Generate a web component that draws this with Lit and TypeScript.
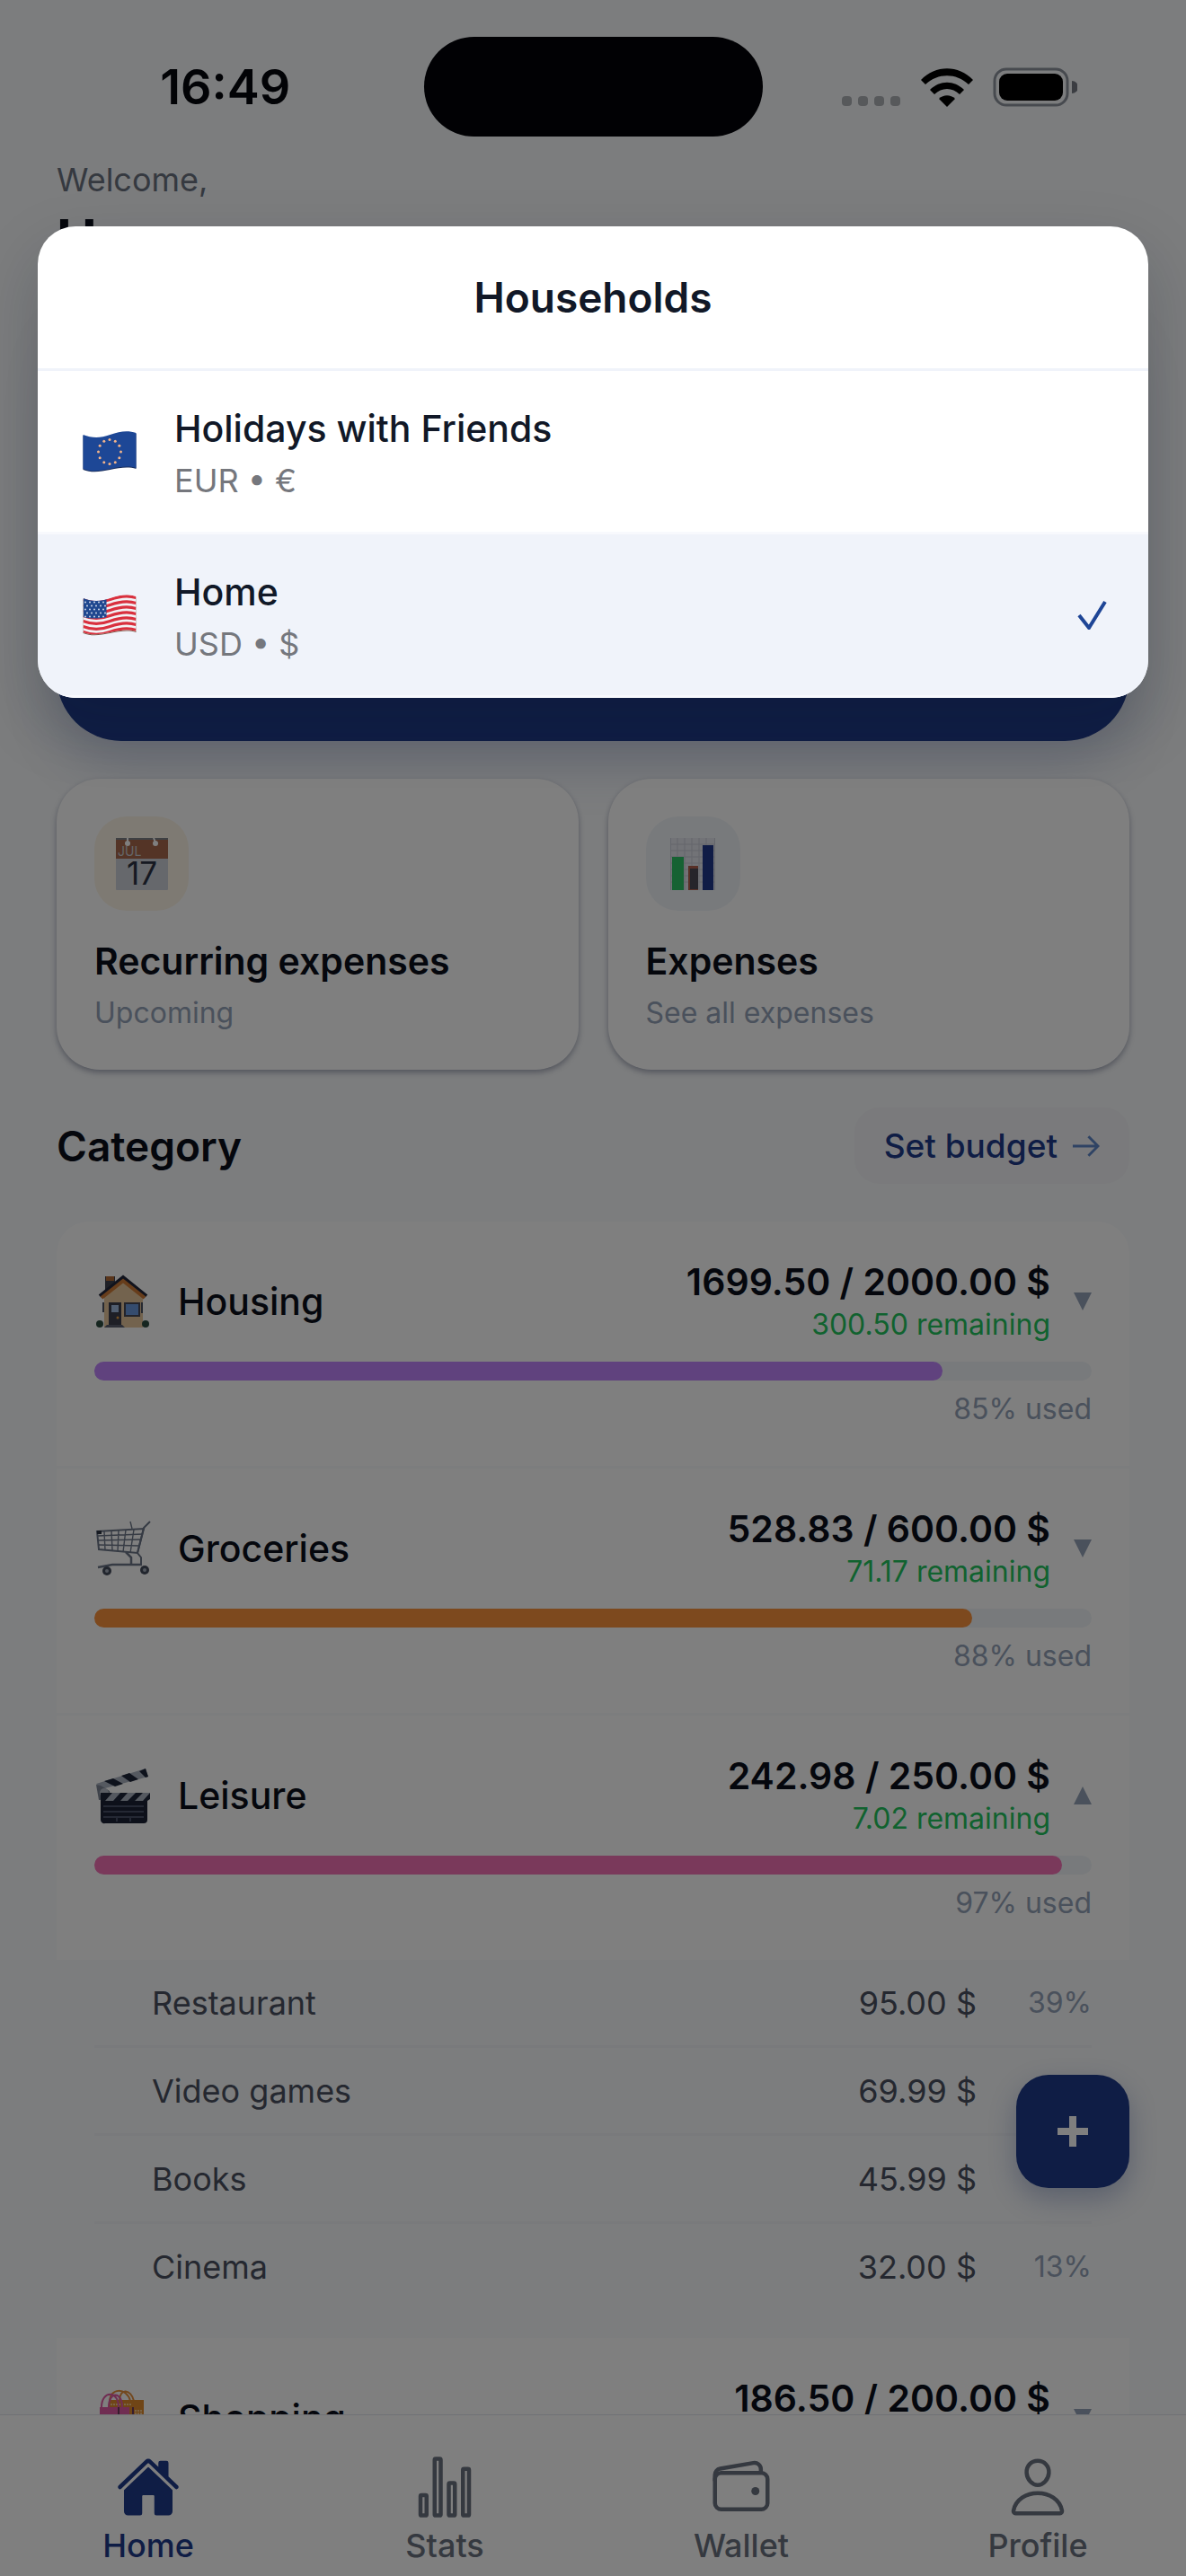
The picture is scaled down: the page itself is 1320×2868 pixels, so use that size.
import { css, html, LitElement, nothing, svg } from "lit";
import { customElement, property } from "lit/decorators.js";

interface Household {
  name: string;
  currency: string;
  flag: string;
  selected: boolean;
}

interface SubCategory {
  name: string;
  amount: string;
  share: string;
}

interface Category {
  name: string;
  icon: string;
  spent: string;
  left?: string;
  used: number;
  color: string;
  items?: SubCategory[];
}

const households: Household[] = [
  { name: "Holidays with Friends", currency: "EUR • €", flag: "eu", selected: false },
  { name: "Home", currency: "USD • $", flag: "us", selected: true },
];

const categories: Category[] = [
  {
    name: "Housing",
    icon: "house",
    spent: "1699.50 / 2000.00 $",
    left: "300.50 remaining",
    used: 85,
    color: "#c084fc",
  },
  {
    name: "Groceries",
    icon: "cart",
    spent: "528.83 / 600.00 $",
    left: "71.17 remaining",
    used: 88,
    color: "#fb923c",
  },
  {
    name: "Leisure",
    icon: "clapper",
    spent: "242.98 / 250.00 $",
    left: "7.02 remaining",
    used: 97,
    color: "#f472b6",
    items: [
      { name: "Restaurant", amount: "95.00 $", share: "39%" },
      { name: "Video games", amount: "69.99 $", share: "" },
      { name: "Books", amount: "45.99 $", share: "" },
      { name: "Cinema", amount: "32.00 $", share: "13%" },
    ],
  },
  {
    name: "Shopping",
    icon: "bags",
    spent: "186.50 / 200.00 $",
    used: 93,
    color: "#60a5fa",
  },
];

const flagShape = "M1 5C11 9 20 9 31 5S51 0 60 3V42C51 39 41 41 31 43S11 47 1 43Z";

// stars of the EU flag sit on a circle
const euStars = Array.from({ length: 12 }, (_, i) => {
  const a = (i * Math.PI) / 6;
  return svg`<circle cx=${30.5 + 12.5 * Math.sin(a)} cy=${24 - 13.5 * Math.cos(a)} r="1.5" fill="#f2b38a" />`;
});

const usStripes = [0, 1, 2, 3, 4, 5, 6].map(
  (i) => svg`<path
    d="M1 ${6.5 + i * 6}C11 ${10.5 + i * 6} 20 ${10.5 + i * 6} 31 ${6.5 + i * 6}S51 ${1.5 + i * 6} 60 ${4.5 + i * 6}"
    fill="none" stroke="#d9303e" stroke-width="3.1" />`
);

const usStars = [0, 1, 2, 3, 4].map((row) =>
  [0, 1, 2, 3, 4].map(
    (col) => svg`<circle cx=${3.5 + col * 5 + (row % 2) * 2} cy=${9.5 + row * 4} r="0.9" fill="#dfe6f2" />`
  )
);

const pictures: Record<string, unknown> = {
  eu: html`<svg class="flag" viewBox="0 0 61 48" aria-hidden="true">
    <path d=${flagShape} fill="#1b2f5c" transform="translate(0 1)" />
    <path d=${flagShape} fill="#1d4796" />
    ${euStars}
  </svg>`,
  us: html`<svg class="flag" viewBox="0 0 61 48" aria-hidden="true">
    <clipPath id="us-clip"><path d=${flagShape} /></clipPath>
    <path d=${flagShape} fill="#7a5a4a" transform="translate(0 1)" />
    <path d=${flagShape} fill="#f2f2f5" />
    <g clip-path="url(#us-clip)">
      ${usStripes}
      <path d="M1 4C10 8 18 8 27 6V26C18 28 10 28 1 26Z" fill="#1f478f" />
      ${usStars}
    </g>
  </svg>`,
  calendar: html`<svg class="tile-art" viewBox="0 0 58 58" aria-hidden="true">
    <rect width="58" height="58" rx="1" fill="#ccd0d8" />
    <rect width="58" height="23" fill="#a8694c" />
    <rect width="58" height="2" fill="#7c8087" />
    <path d="M13 0v5M42 0l2 5" stroke="#fff" stroke-width="2" />
    <circle cx="13" cy="6" r="3" fill="#fff" />
    <circle cx="44" cy="6" r="3" fill="#fff" />
    <text x="2" y="20" class="cal-month">JUL</text>
    <text x="29" y="52" text-anchor="middle" class="cal-day">17</text>
  </svg>`,
  chart: html`<svg class="tile-art" viewBox="0 0 58 58" aria-hidden="true">
    <rect x="4" width="50" height="58" fill="#e4e6ee" />
    <path
      d="M4.5 0v58M12 0v58M20 0v58M28 0v58M36 0v58M44 0v58M53.5 0v58M4 7h50M4 14h50M4 21h50M4 28h50M4 35h50M4 42h50M4 49h50"
      stroke="#c9ccd8"
      fill="none"
    />
    <rect x="6" y="21" width="13" height="37" fill="#2dc466" />
    <rect x="24" y="31" width="11" height="27" fill="#b0604e" />
    <rect x="26" y="34" width="9" height="23" fill="#4d4a56" />
    <rect x="40" y="8" width="12" height="50" fill="#20398c" />
  </svg>`,
  house: html`<svg class="emoji" viewBox="0 0 60 60" aria-hidden="true">
    <path d="M10 2h11v14l-11 9z" fill="#3e414d" />
    <rect x="11" y="2" width="9" height="5" fill="#b26a36" />
    <path d="M9 22L31 5l21 18v36H9z" fill="#e6c79c" />
    <path d="M4 24L30 3l26 21" fill="none" stroke="#22273a" stroke-width="4" />
    <path d="M6 26L30 7l24 19" fill="none" stroke="#cf7a36" stroke-width="4" />
    <rect x="14" y="31" width="14" height="25" fill="#3c3f4c" />
    <rect x="17" y="34" width="8" height="8" fill="#a3bde0" />
    <rect x="32" y="32" width="16" height="14" fill="#6a99dc" stroke="#464957" stroke-width="2" />
    <path d="M8 31v11M51 31v12" stroke="#4d5263" stroke-width="2" />
    <circle cx="24" cy="48" r="1.5" fill="#e69a3c" />
    <circle cx="4" cy="55" r="4" fill="#2c4c40" />
    <circle cx="55" cy="55" r="4" fill="#2c4c40" />
    <path d="M9 59l3-3h17l3 3z" fill="#5a5e6e" />
  </svg>`,
  cart: html`<svg class="emoji" viewBox="0 0 60 60" aria-hidden="true">
    <g fill="none" stroke="#6c7688" stroke-width="1.4">
      <path d="M1 11l52-3L46 35 3 31z" stroke-width="2" />
      <path d="M1 16l51-2M2 21l48-1M2 26l47 1M9 11l1 21M17 10l1 22M25 10l-1 23M33 9l-3 25M42 9l-4 26M38 0l2 8" />
      <path d="M60 0l-7 7-7 28 4 5v8" stroke-width="2" />
      <path d="M33 34l6 6v7M2 51l16-3 33 0" stroke-width="2.5" />
    </g>
    <rect x="1" y="10" width="5" height="4" fill="#2f3644" />
    <circle cx="12" cy="55" r="5" fill="#454c5c" />
    <circle cx="54" cy="54" r="5" fill="#454c5c" />
    <circle cx="12" cy="55" r="2" fill="#a5adba" />
    <circle cx="54" cy="54" r="2" fill="#a5adba" />
  </svg>`,
  clapper: html`<svg class="emoji" viewBox="0 0 60 60" aria-hidden="true">
    <path d="M0 17L55 0l3 9L6 23z" fill="#aab2c0" />
    <path d="M9 14l10-3 11 6-9 3zM28 8l9-3 10 7-9 3zM48 3l7-3 3 9-3 1z" fill="#1d2438" />
    <path d="M0 18l5 1 10 6 1 9-13 1z" fill="#7c8494" />
    <circle cx="9" cy="27" r="5" fill="#b7bdc9" />
    <path d="M5 27h55v7l-3 2H5z" fill="#1d2438" />
    <path d="M18 27h9l-8 9h-9zM35 27h9l-9 9h-8zM52 27h8l-8 9h-9z" fill="#aab2c0" />
    <path d="M5 36h52v21a4 4 0 0 1-4 4H10a4 4 0 0 1-5-4z" fill="#1b2135" />
    <path d="M8 42h45M8 48h45M8 54h45M23 55v4M38 55v4" stroke="#59617a" stroke-width="1.5" />
  </svg>`,
  bags: html`<svg class="emoji" viewBox="0 0 60 60" aria-hidden="true">
    <path d="M15 12C15-4 34-4 38 11M26 11C26-4 39-2 42 11" fill="none" stroke="#e6913c" stroke-width="2" />
    <rect x="14" y="10" width="39" height="46" fill="#e08a2c" />
    <path d="M16 15h24M40 22h12M40 25h12" stroke="#f3c78c" stroke-width="2" stroke-dasharray="2 1" />
    <path d="M6 18C6-1 25-1 25 18M14 18C14 0 29 0 29 18" fill="none" stroke="#e05aa4" stroke-width="2" />
    <rect x="4" y="18" width="33" height="40" fill="#e05aa4" />
    <path d="M25 18v40M41 18v40" stroke="#6c3a5c" stroke-width="2" />
  </svg>`,
};

@customElement("status-bar")
class StatusBarElement extends LitElement {
  render() {
    return html`
      <span class="time">16:49</span>
      <span class="island"></span>
      <span class="icons">
        <svg class="dots" viewBox="0 0 66 12" aria-hidden="true">
          ${[0, 18, 36, 54].map((x) => svg`<rect x=${x} width="11" height="11" rx="4" />`)}
        </svg>
        <svg class="wifi" viewBox="0 0 58 43" aria-hidden="true">
          <path d="M0 13C16-4 42-4 58 13l-5 5C39 5 19 5 5 18z" />
          <path d="M10 24c11-11 27-11 38 0l-5 5c-8-8-20-8-28 0z" />
          <path d="M20 34c5-5 13-5 18 0l-9 9z" />
        </svg>
        <svg class="battery" viewBox="0 0 94 44" aria-hidden="true">
          <rect x="2" y="2" width="81" height="40" rx="13" fill="none" stroke="#8e959e" stroke-width="3" />
          <rect x="7" y="7" width="71" height="30" rx="9" />
          <path d="M88 15a7 7 0 0 1 0 14z" fill="#767b85" />
        </svg>
      </span>
    `;
  }

  static styles = css`
    :host {
      display: grid;
      grid-template-columns: 1fr auto 1fr;
      align-items: center;
      height: 111px;
      padding: 41px 0 0;
      color: #05060d;
    }

    .time {
      justify-self: center;
      padding-left: 30px;
      font-size: 54px;
      font-weight: 600;
    }

    .island {
      width: 377px;
      height: 111px;
      border-radius: 56px;
      background: #020308;
    }

    .icons {
      display: flex;
      align-items: flex-end;
      justify-content: center;
      gap: 22px;
      padding-right: 32px;
    }

    .dots {
      width: 66px;
      height: 12px;
      fill: #afb3b7;
    }

    .wifi {
      width: 58px;
      height: 43px;
    }

    .battery {
      width: 94px;
      height: 44px;
    }
  `;
}

@customElement("category-row")
class CategoryRowElement extends LitElement {
  @property({ attribute: false })
  category!: Category;

  render() {
    const { name, icon, spent, left, used, color, items } = this.category;
    return html`
      <button class="row" aria-expanded=${items ? "true" : "false"}>
        <span class="top">
          ${pictures[icon]}
          <span class="name">${name}</span>
          <span class="sums">
            <span class="spent">${spent}</span>
            <span class="left">${left ?? nothing}</span>
          </span>
          <svg class="caret" viewBox="0 0 20 20" aria-hidden="true">
            <path d=${items ? "M10 0l10 20H0z" : "M0 0h20L10 20z"} />
          </svg>
        </span>
        <span class="track">
          <span class="fill" style="width: ${used}%; background: ${color}"></span>
        </span>
        <span class="used">${left ? `${used}% used` : nothing}</span>
      </button>
      ${items
        ? html`<ul class="items">
            ${items.map(
              (item) => html`<li>
                <span class="item-name">${item.name}</span>
                <span>${item.amount}</span>
                <span class="share">${item.share}</span>
              </li>`
            )}
          </ul>`
        : nothing}
    `;
  }

  static styles = css`
    :host {
      display: block;
    }

    .row {
      display: flex;
      flex-direction: column;
      width: 100%;
      padding: 42px;
      border: 0;
      border-bottom: 3px solid #f9fafc;
      background: #fff;
      color: #0b0f1a;
      font: inherit;
      text-align: left;
    }

    .top {
      display: flex;
      align-items: center;
    }

    .emoji {
      width: 60px;
      height: 60px;
      margin: 0 31px 0 2px;
      overflow: visible;
    }

    .name {
      flex: 1;
      font-size: 41px;
      font-weight: 500;
      line-height: 48px;
    }

    .sums {
      display: flex;
      flex-direction: column;
      align-items: flex-end;
      gap: 2px;
    }

    .spent {
      font-size: 41px;
      font-weight: 600;
      line-height: 50px;
    }

    .left {
      min-height: 42px;
      color: #22c55e;
      font-size: 32px;
      line-height: 42px;
    }

    .caret {
      width: 20px;
      height: 20px;
      margin-left: 26px;
      fill: #94a3b8;
    }

    .track {
      height: 21px;
      margin-top: 20px;
      border-radius: 12px;
      background: #f1f5f9;
    }

    .fill {
      display: block;
      height: 100%;
      border-radius: 12px;
    }

    .used {
      min-height: 42px;
      margin-top: 11px;
      color: #94a3b8;
      font-size: 32px;
      line-height: 42px;
      text-align: right;
    }

    .items {
      margin: -3px 0 0;
      padding: 0 42px 32px;
      background: #f8fafc;
      list-style: none;
    }

    .items li {
      display: flex;
      align-items: center;
      height: 95px;
      padding-left: 64px;
      border-bottom: 3px solid #f3f5f8;
      color: #4b5161;
      font-size: 36px;
    }

    .items li:last-child {
      border-bottom: 0;
    }

    .item-name {
      flex: 1;
    }

    .share {
      width: 128px;
      color: #94a3b8;
      font-size: 32px;
      text-align: right;
    }
  `;
}

@customElement("tab-bar")
class TabBarElement extends LitElement {
  render() {
    return html`
      <a class="tab active" href="#home">
        <svg viewBox="0 0 512 512" fill="currentColor" aria-hidden="true">
          <path
            d="M261.56 101.28a8 8 0 0 0-11.06 0L66.4 277.15a8 8 0 0 0-2.47 5.79L63.9 448a32 32 0 0 0 32 32H192a16 16 0 0 0 16-16V328a8 8 0 0 1 8-8h80a8 8 0 0 1 8 8v136a16 16 0 0 0 16 16h96.06a32 32 0 0 0 32-32V282.94a8 8 0 0 0-2.47-5.79z"
          />
          <path
            d="M490.91 244.15l-74.8-71.56V64a16 16 0 0 0-16-16h-48a16 16 0 0 0-16 16v32l-57.92-55.38C272.77 35.14 264.71 32 256 32c-8.68 0-16.72 3.14-22.14 8.63l-212.7 203.5c-6.22 6-7 15.87-1.34 22.37A16 16 0 0 0 43 267.56L250.5 69.28a8 8 0 0 1 11.06 0l207.52 198.28a16 16 0 0 0 22.59-.44c6.14-6.36 5.63-16.86-.76-22.97z"
          />
        </svg>
        Home
      </a>
      <a class="tab" href="#stats">
        <svg viewBox="0 0 512 512" fill="none" stroke="currentColor" stroke-width="32" aria-hidden="true">
          <rect x="64" y="320" width="48" height="160" rx="8" />
          <rect x="288" y="224" width="48" height="256" rx="8" />
          <rect x="400" y="112" width="48" height="368" rx="8" />
          <rect x="176" y="32" width="48" height="448" rx="8" />
        </svg>
        Stats
      </a>
      <a class="tab" href="#wallet">
        <svg viewBox="0 0 512 512" fill="none" stroke="currentColor" stroke-width="32" aria-hidden="true">
          <rect x="48" y="144" width="416" height="288" rx="48" />
          <path d="M411.36 144v-30A50 50 0 0 0 352 64.9L88.64 109.85A50 50 0 0 0 48 159v49" />
          <circle cx="368" cy="288" r="32" fill="currentColor" stroke="none" />
        </svg>
        Wallet
      </a>
      <a class="tab" href="#profile">
        <svg viewBox="0 0 512 512" fill="none" stroke="currentColor" stroke-width="32" aria-hidden="true">
          <path d="M344 144c-3.92 52.87-44 96-88 96s-84.15-43.12-88-96c-4-55 35-96 88-96s92 42 88 96z" />
          <path
            d="M256 304c-87 0-175.3 48-191.64 138.6C62.39 453.52 68.57 464 80 464h352c11.44 0 17.62-10.48 15.65-21.4C431.3 352 343 304 256 304z"
          />
        </svg>
        Profile
      </a>
    `;
  }

  static styles = css`
    :host {
      display: grid;
      grid-template-columns: repeat(4, 1fr);
      padding: 44px 0 11px;
      border-top: 1px solid #e2e5ec;
      background: #fff;
    }

    .tab {
      display: flex;
      flex-direction: column;
      align-items: center;
      gap: 7px;
      color: #6b7280;
      font-size: 36px;
      font-weight: 500;
      line-height: 45px;
      text-decoration: none;
    }

    .tab svg {
      width: 72px;
      height: 72px;
    }

    .active {
      color: #1e3a8a;
    }
  `;
}

@customElement("household-picker")
class HouseholdPickerElement extends LitElement {
  render() {
    return html`
      <div class="sheet" role="dialog" aria-labelledby="title">
        <h2 id="title">Households</h2>
        ${households.map(
          (item) => html`<button class="option ${item.selected ? "selected" : ""}">
            ${pictures[item.flag]}
            <span class="text">
              <span class="name">${item.name}</span>
              <span class="currency">${item.currency}</span>
            </span>
            ${item.selected
              ? html`<svg class="check" viewBox="0 0 33 33" aria-hidden="true">
                  <path d="M2 17l11 14L31 2" />
                </svg>`
              : nothing}
          </button>`
        )}
      </div>
    `;
  }

  static styles = css`
    :host {
      display: block;
      padding: 252px 42px 0;
      background: rgba(0, 0, 0, 0.5);
    }

    .sheet {
      overflow: hidden;
      border-radius: 42px;
      background: #fff;
      box-shadow: 0 30px 72px rgba(15, 23, 42, 0.2);
      color: #111827;
    }

    h2 {
      margin: 0;
      padding: 49px 42px;
      border-bottom: 3px solid #f0f3fa;
      font-size: 46px;
      font-weight: 600;
      line-height: 60px;
      text-align: center;
    }

    .option {
      display: flex;
      align-items: center;
      width: 100%;
      height: 182px;
      padding: 0 46px 0 48px;
      border: 0;
      border-bottom: 3px solid #f8f9fd;
      background: #fff;
      color: inherit;
      font: inherit;
      text-align: left;
    }

    .selected {
      background: #f0f3fa;
    }

    .flag {
      width: 64px;
      height: 48px;
      margin-right: 40px;
      overflow: visible;
    }

    .text {
      display: flex;
      flex: 1;
      flex-direction: column;
      gap: 4px;
      padding-top: 6px;
    }

    .name {
      font-size: 41px;
      font-weight: 500;
      line-height: 54px;
    }

    .currency {
      color: #75777d;
      font-size: 36px;
      line-height: 54px;
    }

    .check {
      width: 33px;
      height: 33px;
      fill: none;
      stroke: #1e4596;
      stroke-width: 4;
    }
  `;
}

@customElement("app-root")
class AppRootElement extends LitElement {
  render() {
    return html`
      <div class="page">
        <status-bar></status-bar>
        <header>
          <p class="welcome">Welcome,</p>
          <h1>Home</h1>
        </header>
        <section class="balance"></section>
        <section class="tiles">
          <button class="tile">
            <span class="tile-icon amber">${pictures.calendar}</span>
            <span class="tile-title">Recurring expenses</span>
            <span class="tile-note">Upcoming</span>
          </button>
          <button class="tile">
            <span class="tile-icon slate">${pictures.chart}</span>
            <span class="tile-title">Expenses</span>
            <span class="tile-note">See all expenses</span>
          </button>
        </section>
        <section class="heading">
          <h2>Category</h2>
          <button class="budget">
            Set budget
            <svg viewBox="0 0 32 26" aria-hidden="true">
              <path d="M1 13h29M19 2l11 11-11 11" />
            </svg>
          </button>
        </section>
        <section class="list">
          ${categories.map((item) => html`<category-row .category=${item}></category-row>`)}
        </section>
      </div>
      <button class="add" aria-label="Add expense">
        <svg viewBox="0 0 34 34" aria-hidden="true"><path d="M17 0v34M0 17h34" /></svg>
      </button>
      <tab-bar></tab-bar>
      <household-picker></household-picker>
    `;
  }

  static styles = css`
    :host {
      display: flex;
      position: relative;
      flex-direction: column;
      height: 100vh;
      overflow: hidden;
      background: #f8fafc;
      font-family: Inter, "Liberation Sans", sans-serif;
    }

    button {
      border: 0;
      font: inherit;
      text-align: left;
    }

    .page {
      flex: 1;
      min-height: 0;
      overflow: hidden;
    }

    header,
    .balance,
    .tiles,
    .heading,
    .list {
      margin: 0 63px;
    }

    header {
      padding-top: 24px;
    }

    .welcome {
      margin: 0;
      color: #6b7280;
      font-size: 36px;
      line-height: 48px;
    }

    h1 {
      margin: 6px 0 32px;
      color: #0b0f1a;
      font-size: 60px;
      font-weight: 700;
      line-height: 72px;
    }

    .balance {
      height: 491px;
      border-radius: 72px;
      background: #1e3a8a;
      box-shadow: 0 24px 60px rgba(30, 58, 138, 0.2);
    }

    .tiles {
      display: grid;
      position: relative;
      grid-template-columns: 1fr 1fr;
      gap: 33px;
      margin-top: 42px;
    }

    .tile {
      display: flex;
      flex-direction: column;
      padding: 42px;
      border-radius: 48px;
      background: #fff;
      box-shadow: 0 3px 6px rgba(15, 23, 62, 0.35);
    }

    .tile-icon {
      display: flex;
      align-items: center;
      justify-content: center;
      width: 105px;
      height: 105px;
      border-radius: 36px;
    }

    .amber {
      background: #fdf5e6;
    }

    .slate {
      background: #f1f5f9;
    }

    .tile-art {
      width: 58px;
      height: 58px;
    }

    .cal-month {
      fill: #c9ccd2;
      font-size: 14px;
    }

    .cal-day {
      fill: #2c3344;
      font-size: 35px;
    }

    .tile-title {
      margin-top: 29px;
      color: #0b0f1a;
      font-size: 41px;
      font-weight: 600;
      line-height: 54px;
    }

    .tile-note {
      margin-top: 10px;
      color: #94a3b8;
      font-size: 32px;
      line-height: 42px;
    }

    .heading {
      display: flex;
      align-items: center;
      justify-content: space-between;
      margin-top: 42px;
    }

    h2 {
      margin: 0;
      color: #0b0f1a;
      font-size: 46px;
      font-weight: 600;
    }

    .budget {
      display: flex;
      align-items: center;
      gap: 16px;
      height: 85px;
      padding: 0 33px;
      border-radius: 28px;
      background: #f4f5f8;
      color: #1e3a8a;
      font-size: 37px;
      font-weight: 500;
    }

    .budget svg {
      width: 31px;
      height: 26px;
      fill: none;
      stroke: #5f86c8;
      stroke-width: 3;
    }

    .list {
      margin-top: 42px;
      overflow: hidden;
      border-radius: 36px 36px 0 0;
    }

    .add {
      display: flex;
      position: absolute;
      right: 63px;
      bottom: 432px;
      align-items: center;
      justify-content: center;
      width: 126px;
      height: 126px;
      border-radius: 36px;
      background: #1e3a8a;
      box-shadow: 0 12px 30px rgba(30, 58, 138, 0.3);
    }

    .add svg {
      width: 34px;
      height: 34px;
      stroke: #fff;
      stroke-width: 8;
    }

    household-picker {
      position: absolute;
      inset: 0;
    }
  `;
}
